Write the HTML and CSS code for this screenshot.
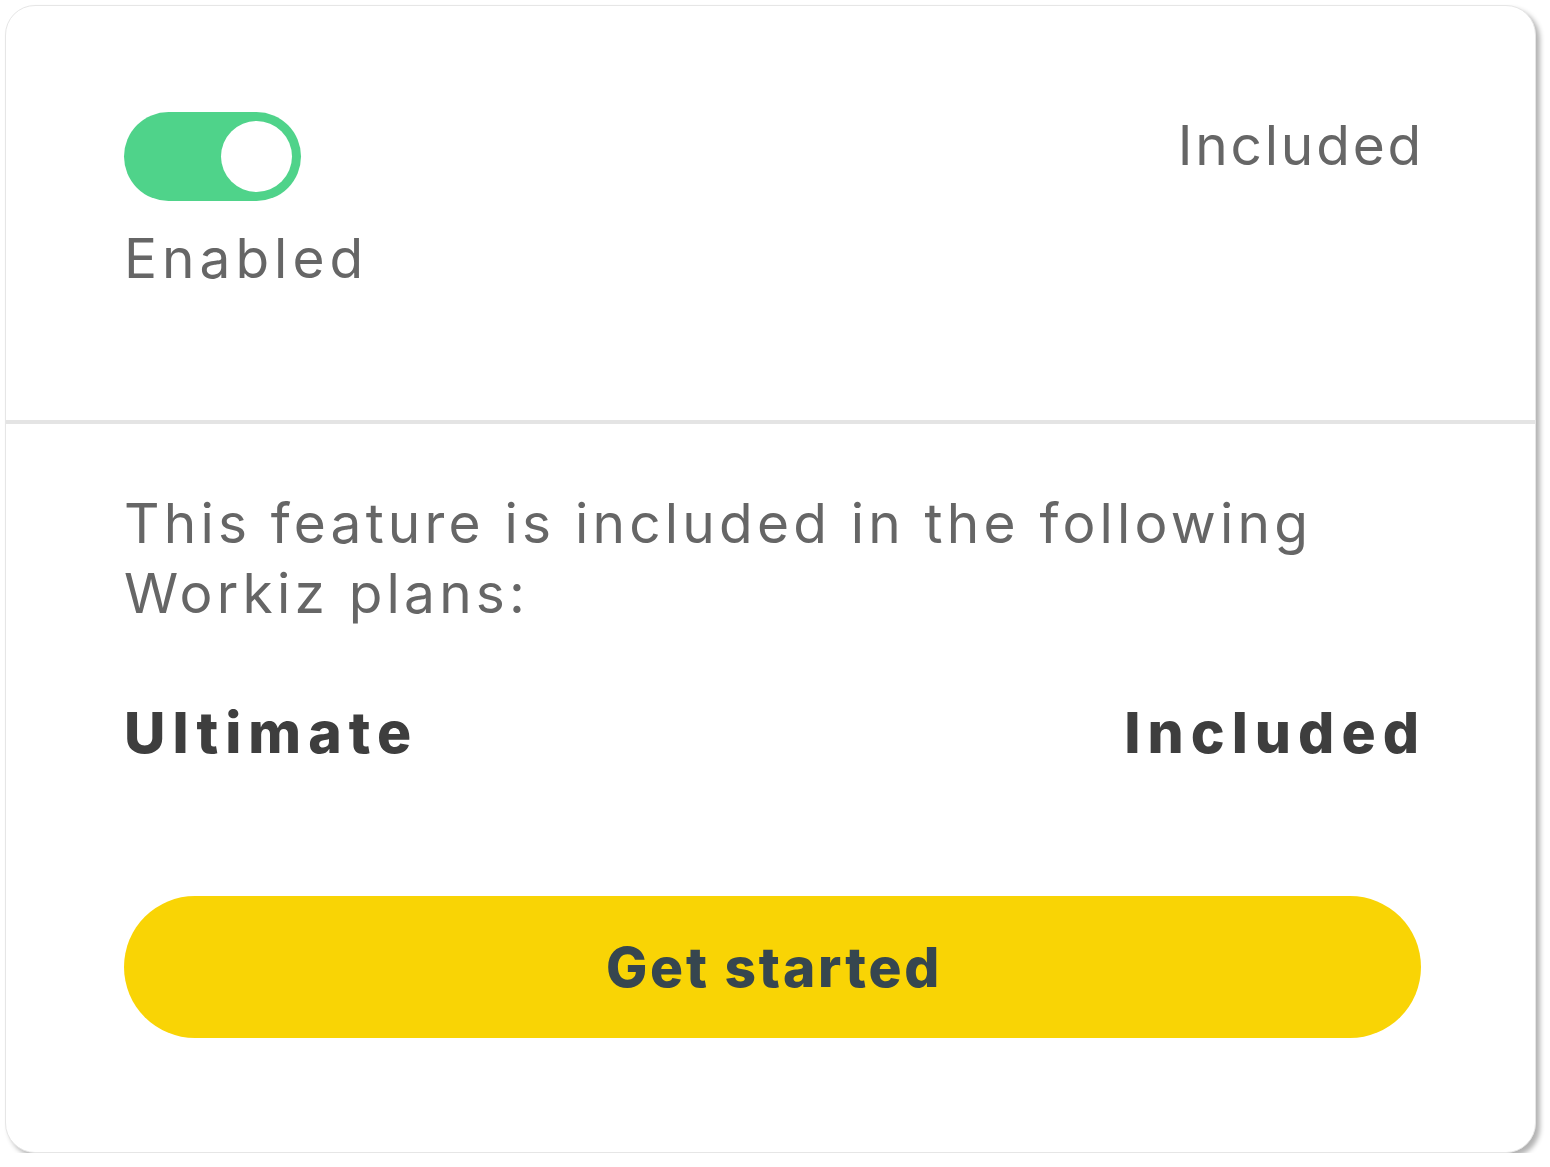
FILE: index.html
```html
<!DOCTYPE html>
<html lang="en">
<head>
    <meta charset="UTF-8">
    <meta name="viewport" content="width=device-width, initial-scale=1.0">
    <title>Feature Plan Card</title>
    <link rel="stylesheet" href="styles.css">
</head>
<body>

<div class="card">
    <div class="card-top">
        <div class="status">
            <div class="toggle on"><span class="knob"></span></div>
            <div class="status-label">Enabled</div>
        </div>
        <div class="top-note">Included</div>
    </div>

    <div class="card-bottom">
        <p class="desc">This feature is included in the following Workiz plans:</p>
        <div class="plan-row">
            <span>Ultimate</span>
            <span>Included</span>
        </div>
        <button class="btn">Get started</button>
    </div>
</div>

</body>
</html>
```

FILE: styles.css
```css
body {
    font-family: Inter, "Open Sans", sans-serif;
    background-color: #fff;
    margin: 0;
    padding: 5px 0 0 5px;
}
.card {
    width: 1531px;
    height: 1148px;
    box-sizing: border-box;
    background: #fff;
    border: 1px solid #e6e6e6;
    border-radius: 30px;
    box-shadow: 4px 4px 5px rgba(0, 0, 0, 0.3);
    overflow: hidden;
}
.card-top {
    display: flex;
    justify-content: space-between;
    align-items: flex-start;
    height: 418px;
    box-sizing: border-box;
    padding: 106px 114px 0 118px;
    border-bottom: 4px solid #e4e4e4;
}
.toggle {
    width: 177px;
    height: 89px;
    box-sizing: border-box;
    padding: 9px;
    border-radius: 45px;
    background-color: #cfcfcf;
    display: flex;
    align-items: center;
}
.toggle.on {
    background-color: #4fd38a;
    justify-content: flex-end;
}
.knob {
    width: 71px;
    height: 71px;
    border-radius: 50%;
    background: #fff;
}
.status-label, .top-note {
    font-size: 55px;
    line-height: 1;
    color: #666;
}
.status-label {
    margin-top: 30px;
    letter-spacing: 5px;
}
.top-note {
    margin-top: 6px;
    margin-right: -3px;
    letter-spacing: 2.8px;
}
.card-bottom {
    padding: 64px 114px 0 118px;
}
.desc {
    margin: 0;
    font-size: 55px;
    line-height: 70px;
    letter-spacing: 4.2px;
    color: #666;
    padding-right: 60px;
}
.plan-row {
    display: flex;
    justify-content: space-between;
    margin: 76px -5px 0 0;
    font-size: 57px;
    line-height: 1;
    font-weight: 800;
    letter-spacing: 7px;
    color: #3e3e3e;
}
.btn {
    display: flex;
    align-items: center;
    justify-content: center;
    width: 100%;
    height: 142px;
    margin-top: 135px;
    padding: 0 0 0 3px;
    border: none;
    border-radius: 71px;
    background-color: #f9d405;
    color: #36464f;
    font-family: inherit;
    font-size: 55px;
    font-weight: 800;
    letter-spacing: 2.8px;
    cursor: pointer;
}
```
